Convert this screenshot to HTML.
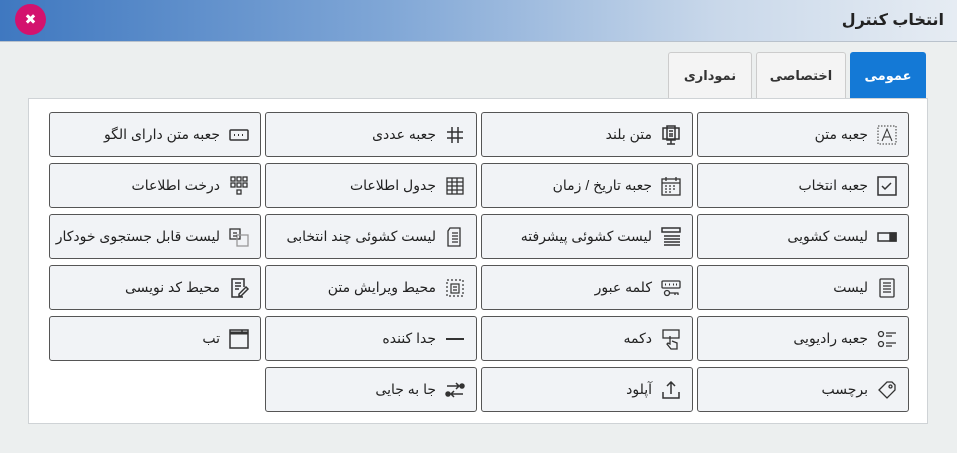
<!DOCTYPE html>
<html><head><meta charset="utf-8"><style>
*{margin:0;padding:0;box-sizing:border-box}
body{width:957px;height:453px;background:#ecefef;font-family:"Liberation Sans","DejaVu Sans",sans-serif;position:relative;overflow:hidden}
.title{position:absolute;left:0;top:0;width:957px;height:42px;background:linear-gradient(90deg,#3f78c0 0%,#7fa6d6 40%,#c9d8ea 75%,#e6ecf3 100%);border-bottom:1px solid #b9c2cc}
.title span{position:absolute;right:13px;top:10px;font-size:16px;color:#222;font-weight:bold}
.close{position:absolute;left:15px;top:4px;width:31px;height:31px;border-radius:50%;background:#d3126e;color:#fff;font-weight:bold;font-size:14px;text-align:center;line-height:31px}
.tab{position:absolute;top:52px;height:46px;border:1px solid #ccc;border-bottom:none;border-radius:3px 3px 0 0;background:#f4f4f4;font-size:13px;font-weight:bold;color:#333;text-align:center;line-height:46px}
.tab.on{background:#1479d6;color:#fff;border-color:#1479d6}
.panel{position:absolute;left:28px;top:98px;width:900px;height:326px;background:#fff;border:1px solid #cfd3d6}
.c{position:absolute;width:212px;height:45px;background:#f1f3f6;border:1px solid #555;border-radius:3px;direction:rtl;font-size:14px;color:#222;display:flex;align-items:center;padding-right:10px}
.c svg{width:22px;height:22px;margin-left:8px;flex:none}
</style></head><body>
<div class="title"><span>انتخاب کنترل</span><div class="close">✖</div></div>
<div class="tab on" style="left:850px;width:76px">عمومی</div>
<div class="tab" style="left:756px;width:90px">اختصاصی</div>
<div class="tab" style="left:668px;width:84px">نموداری</div>
<div class="panel"></div>

<div class="c" style="left:697px;top:112px"><svg viewBox="0 0 22 22" fill="none" stroke="#333"><rect x="2" y="2" width="18" height="18" stroke-dasharray="1.5 1.5"/><path d="M6 17L11 5L16 17M8 13h6"/></svg>جعبه متن</div>
<div class="c" style="left:481px;top:112px"><svg viewBox="0 0 22 22" fill="none" stroke="#333" stroke-width="1.5"><rect x="3" y="4" width="16" height="11"/><rect x="7" y="2" width="8" height="14"/><path d="M11 16v4M7 20h8M9 7h4M9 10h4M9 12h4"/></svg>متن بلند</div>
<div class="c" style="left:265px;top:112px"><svg viewBox="0 0 22 22" fill="none" stroke="#333" stroke-width="1.5"><path d="M8 3v16M14 3v16M3 8h16M3 14h16"/></svg>جعبه عددی</div>
<div class="c" style="left:49px;top:112px"><svg viewBox="0 0 22 22" fill="none" stroke="#333" stroke-width="1.5"><rect x="2" y="6" width="18" height="10" rx="1"/><path d="M6 11h1M10 11h1M14 11h1" stroke-width="2"/></svg>جعبه متن دارای الگو</div>

<div class="c" style="left:697px;top:163px"><svg viewBox="0 0 22 22" fill="none" stroke="#333" stroke-width="1.5"><rect x="2" y="2" width="18" height="18"/><path d="M6 11l3 3 6-6"/></svg>جعبه انتخاب</div>
<div class="c" style="left:481px;top:163px"><svg viewBox="0 0 22 22" fill="none" stroke="#333" stroke-width="1.3"><rect x="2" y="4" width="18" height="16"/><path d="M2 8h18M6 2v4M16 2v4M5 11h2M9 11h2M13 11h2M5 14h2M9 14h2M13 14h2M5 17h2M9 17h2"/></svg>جعبه تاریخ / زمان</div>
<div class="c" style="left:265px;top:163px"><svg viewBox="0 0 22 22" fill="none" stroke="#333" stroke-width="1.3"><rect x="3" y="3" width="16" height="16"/><path d="M3 7h16M3 11h16M3 15h16M8 3v16M13 3v16"/></svg>جدول اطلاعات</div>
<div class="c" style="left:49px;top:163px"><svg viewBox="0 0 22 22" fill="none" stroke="#333" stroke-width="1.3"><rect x="3" y="2" width="4" height="4"/><rect x="9" y="2" width="4" height="4"/><rect x="15" y="2" width="4" height="4"/><rect x="3" y="8" width="4" height="4"/><rect x="9" y="8" width="4" height="4"/><rect x="15" y="8" width="4" height="4"/><rect x="9" y="15" width="4" height="4"/></svg>درخت اطلاعات</div>

<div class="c" style="left:697px;top:214px"><svg viewBox="0 0 22 22" fill="none" stroke="#333" stroke-width="1.5"><rect x="2" y="7" width="18" height="8"/><rect x="14" y="7" width="6" height="8" fill="#333"/></svg>لیست کشویی</div>
<div class="c" style="left:481px;top:214px"><svg viewBox="0 0 22 22" fill="none" stroke="#333" stroke-width="1.5"><rect x="2" y="2" width="18" height="4"/><path d="M4 10h16M4 13h16M4 16h16M4 19h16"/></svg>لیست کشوئی پیشرفته</div>
<div class="c" style="left:265px;top:214px"><svg viewBox="0 0 22 22" fill="none" stroke="#333" stroke-width="1.3"><path d="M6 2h10v18H4V5z"/><path d="M8 7h6M8 10h6M8 13h6M8 16h6"/></svg>لیست کشوئی چند انتخابی</div>
<div class="c" style="left:49px;top:214px"><svg viewBox="0 0 22 22" fill="none" stroke="#333" stroke-width="1.3"><rect x="2" y="3" width="10" height="10"/><rect x="9" y="9" width="11" height="11" stroke="#999"/><path d="M5 7h4M5 10h4"/></svg>لیست قابل جستجوی خودکار</div>

<div class="c" style="left:697px;top:265px"><svg viewBox="0 0 22 22" fill="none" stroke="#333" stroke-width="1.3"><rect x="4" y="2" width="14" height="18" rx="1"/><path d="M7 6h8M7 9h8M7 12h8M7 15h8"/></svg>لیست</div>
<div class="c" style="left:481px;top:265px"><svg viewBox="0 0 22 22" fill="none" stroke="#333" stroke-width="1.3"><rect x="2" y="4" width="18" height="7" rx="1"/><path d="M5 7.5h1M9 7.5h1M13 7.5h1M16 7.5h1" stroke-width="2"/><circle cx="7" cy="16" r="2.5"/><path d="M9.5 16h9M15 16v2M18 16v2"/></svg>کلمه عبور</div>
<div class="c" style="left:265px;top:265px"><svg viewBox="0 0 22 22" fill="none" stroke="#333" stroke-width="1.2"><rect x="3" y="3" width="16" height="16" stroke-dasharray="2 2"/><rect x="7" y="7" width="8" height="9"/><path d="M9 10h4M9 13h4"/></svg>محیط ویرایش متن</div>
<div class="c" style="left:49px;top:265px"><svg viewBox="0 0 22 22" fill="none" stroke="#333" stroke-width="1.5"><path d="M15 20H4V2h12v8"/><path d="M7 6h6M7 9h6M7 12h4M13 19l7-7-2-2-7 7v2z"/></svg>محیط کد نویسی</div>

<div class="c" style="left:697px;top:316px"><svg viewBox="0 0 22 22" fill="none" stroke="#333" stroke-width="1.3"><circle cx="5" cy="6" r="2.5"/><circle cx="5" cy="16" r="2.5"/><path d="M10 5h10M10 8h6M10 15h10M10 18h6"/></svg>جعبه رادیویی</div>
<div class="c" style="left:481px;top:316px"><svg viewBox="0 0 22 22" fill="none" stroke="#333" stroke-width="1.3"><rect x="3" y="2" width="16" height="8"/><path d="M10 8v8l-2-1-1 1 4 5h6v-6l-5-2"/></svg>دکمه</div>
<div class="c" style="left:265px;top:316px"><svg viewBox="0 0 22 22" fill="none" stroke="#333" stroke-width="2"><path d="M2 11h18"/></svg>جدا کننده</div>
<div class="c" style="left:49px;top:316px"><svg viewBox="0 0 22 22" fill="none" stroke="#333" stroke-width="1.5"><rect x="2" y="2" width="18" height="18"/><path d="M2 5h18" stroke-width="3"/><path d="M14 2v3"/></svg>تب</div>

<div class="c" style="left:697px;top:367px"><svg viewBox="0 0 22 22" fill="none" stroke="#333" stroke-width="1.3"><path d="M3 11l8-8h5l3 3v5l-8 8z"/><circle cx="14.5" cy="7.5" r="1.5"/></svg>برچسب</div>
<div class="c" style="left:481px;top:367px"><svg viewBox="0 0 22 22" fill="none" stroke="#333" stroke-width="1.5"><path d="M3 13v6h16v-6M11 15V3M7 7l4-4 4 4"/></svg>آپلود</div>
<div class="c" style="left:265px;top:367px"><svg viewBox="0 0 22 22" fill="#333" stroke="#333" stroke-width="1.5"><path d="M3 7h12M12 4l3 3-3 3M19 15H7M10 12l-3 3 3 3" fill="none"/><circle cx="18" cy="7" r="2"/><circle cx="4" cy="15" r="2"/></svg>جا به جایی</div>
</body></html>
